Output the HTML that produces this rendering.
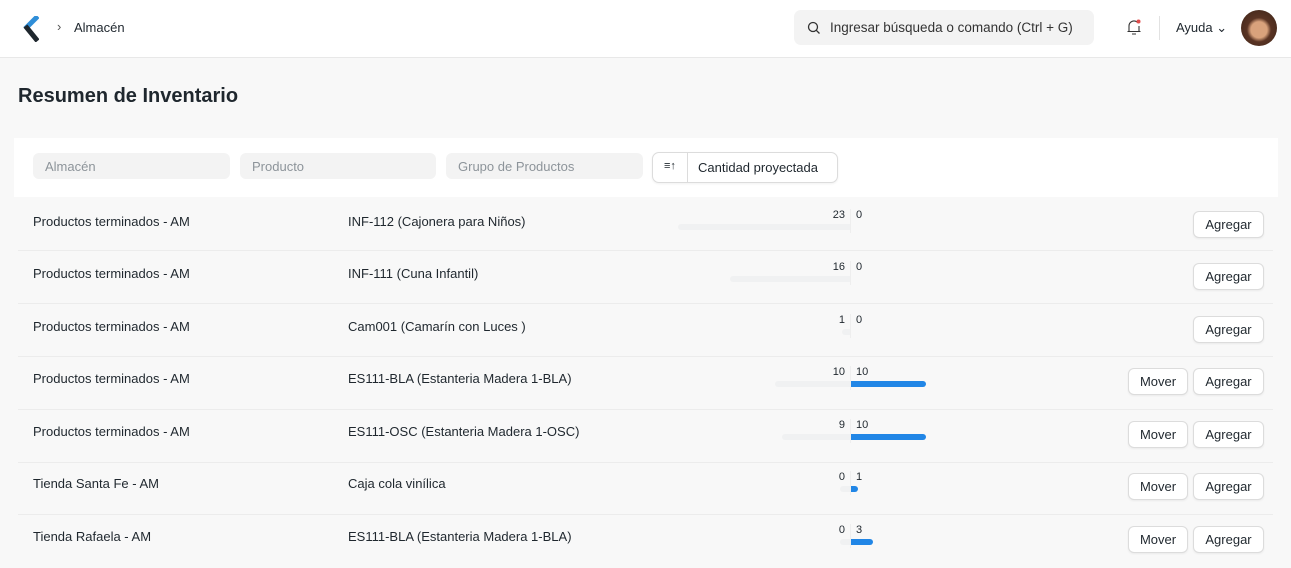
<!DOCTYPE html>
<html><head><meta charset="utf-8"><style>
*{box-sizing:border-box;margin:0;padding:0}
body{width:1291px;height:563px;overflow:hidden;background:#f8f8f8;font-family:"Liberation Sans",sans-serif;color:#1f272e;position:relative}
.nav{position:absolute;left:0;top:0;width:1291px;height:58px;background:#fff;border-bottom:1px solid #e8e8e8}
.abs{position:absolute}
.t13{font-size:13px}
.inp{position:absolute;top:153px;height:26px;background:#f3f3f3;border-radius:6px;font-size:13px;color:#8d949a;padding:6px 12px}
.row{position:absolute;left:18px;width:1255px;height:53px;border-bottom:1px solid #ececec}
.c1{position:absolute;left:15px;font-size:13px}
.c2{position:absolute;left:330px;font-size:13px}
.n{position:absolute;font-size:11px}
.gb{position:absolute;height:6px;background:#f0f1f2;border-radius:3px 0 0 3px}
.bb{position:absolute;left:833px;height:6px;background:#2186e6;border-radius:0 3px 3px 0}
.btn{position:absolute;height:27px;background:#fff;border:1px solid #dcdcdc;border-radius:6px;font-size:13px;text-align:center;line-height:25px;box-shadow:0 1px 2px rgba(0,0,0,.06)}
.vl{position:absolute;left:832px;width:1px;background:#eee}
</style></head><body>
<div class="nav">
<svg class="abs" style="left:23px;top:16px" width="16" height="26" viewBox="0 0 16 26"><path d="M13 2 L4 11" stroke="#2f8ed8" stroke-width="5" stroke-linecap="square"/><path d="M4 12 L13 23" stroke="#1f272e" stroke-width="5" stroke-linecap="square"/></svg>
<div class="abs" style="left:57px;top:19px;font-size:13px;color:#555">›</div>
<div class="abs t13" style="left:74px;top:20px">Almacén</div>
<div class="abs" style="left:794px;top:10px;width:300px;height:35px;background:#f3f3f3;border-radius:7px"></div>
<svg class="abs" style="left:807px;top:21px" width="14" height="14" viewBox="0 0 14 14"><circle cx="6" cy="6" r="4.5" fill="none" stroke="#333" stroke-width="1.3"/><path d="M9.3 9.3 L12.5 12.5" stroke="#333" stroke-width="1.3"/></svg>
<div class="abs" style="left:830px;top:20px;color:#333;font-size:13.5px">Ingresar búsqueda o comando (Ctrl + G)</div>
<svg class="abs" style="left:1126px;top:18px" width="16" height="18" viewBox="0 0 16 18"><path d="M3 13 V8 A5 5 0 0 1 11 4 M13 8 V13 M1.5 13.5 H14.5 M6 16 H10" fill="none" stroke="#333" stroke-width="1.1"/><circle cx="12.5" cy="3.5" r="2" fill="#e24c4c"/></svg>
<div class="abs" style="left:1159px;top:16px;width:1px;height:24px;background:#e2e2e2"></div>
<div class="abs" style="left:1176px;top:20px;font-size:13px">Ayuda ⌄</div>
<div class="abs" style="left:1241px;top:10px;width:36px;height:36px;border-radius:50%;background:radial-gradient(circle at 50% 55%,#d9a27c 0 30%,#5a3424 45%,#3b2418 100%)"></div>
</div>
<div class="abs" style="left:18px;top:85px;font-size:20px;font-weight:bold">Resumen de Inventario</div>
<div class="abs" style="left:14px;top:138px;width:1264px;height:59px;background:#fff"></div>
<div class="inp" style="left:33px;width:197px">Almacén</div>
<div class="inp" style="left:240px;width:196px">Producto</div>
<div class="inp" style="left:446px;width:197px">Grupo de Productos</div>
<div class="abs" style="left:652px;top:152px;width:186px;height:31px;background:#fff;border:1px solid #dcdcdc;border-radius:7px;box-shadow:0 1px 2px rgba(0,0,0,.06)">
<div class="abs" style="left:34px;top:0;width:1px;height:29px;background:#dcdcdc"></div>
<div class="abs" style="left:11px;top:7px;font-size:11px">≡↑</div>
<div class="abs t13" style="left:45px;top:7px">Cantidad proyectada</div></div>

<div class="row" style="top:198px"><div class="c1" style="top:16px">Productos terminados - AM</div><div class="c2" style="top:16px">INF-112 (Cajonera para Niños)</div>
<div class="vl" style="top:11px;height:24px"></div><div class="n" style="right:428px;top:11px">23</div><div class="n" style="left:838px;top:11px">0</div><div class="gb" style="left:660px;width:172px;top:26px"></div>
<div class="btn" style="left:1175px;top:13px;width:71px">Agregar</div></div>
<div class="row" style="top:251px"><div class="c1" style="top:15px">Productos terminados - AM</div><div class="c2" style="top:15px">INF-111 (Cuna Infantil)</div>
<div class="vl" style="top:10px;height:24px"></div><div class="n" style="right:428px;top:10px">16</div><div class="n" style="left:838px;top:10px">0</div><div class="gb" style="left:712px;width:120px;top:25px"></div>
<div class="btn" style="left:1175px;top:12px;width:71px">Agregar</div></div>
<div class="row" style="top:304px"><div class="c1" style="top:15px">Productos terminados - AM</div><div class="c2" style="top:15px">Cam001 (Camarín con Luces )</div>
<div class="vl" style="top:10px;height:24px"></div><div class="n" style="right:428px;top:10px">1</div><div class="n" style="left:838px;top:10px">0</div><div class="gb" style="left:824px;width:8px;top:25px"></div>
<div class="btn" style="left:1175px;top:12px;width:71px">Agregar</div></div>
<div class="row" style="top:357px"><div class="c1" style="top:14px">Productos terminados - AM</div><div class="c2" style="top:14px">ES111-BLA (Estanteria Madera 1-BLA)</div>
<div class="vl" style="top:9px;height:24px"></div><div class="n" style="right:428px;top:9px">10</div><div class="n" style="left:838px;top:9px">10</div><div class="gb" style="left:757px;width:75px;top:24px"></div><div class="bb" style="width:75px;top:24px"></div>
<div class="btn" style="left:1110px;top:11px;width:60px">Mover</div><div class="btn" style="left:1175px;top:11px;width:71px">Agregar</div></div>
<div class="row" style="top:410px"><div class="c1" style="top:14px">Productos terminados - AM</div><div class="c2" style="top:14px">ES111-OSC (Estanteria Madera 1-OSC)</div>
<div class="vl" style="top:9px;height:24px"></div><div class="n" style="right:428px;top:9px">9</div><div class="n" style="left:838px;top:9px">10</div><div class="gb" style="left:764px;width:68px;top:24px"></div><div class="bb" style="width:75px;top:24px"></div>
<div class="btn" style="left:1110px;top:11px;width:60px">Mover</div><div class="btn" style="left:1175px;top:11px;width:71px">Agregar</div></div>
<div class="row" style="top:462px"><div class="c1" style="top:14px">Tienda Santa Fe - AM</div><div class="c2" style="top:14px">Caja cola vinílica</div>
<div class="vl" style="top:9px;height:24px"></div><div class="n" style="right:428px;top:9px">0</div><div class="n" style="left:838px;top:9px">1</div><div class="gb" style="left:822px;width:10px;top:24px"></div><div class="bb" style="width:7px;top:24px"></div>
<div class="btn" style="left:1110px;top:11px;width:60px">Mover</div><div class="btn" style="left:1175px;top:11px;width:71px">Agregar</div></div>
<div class="row" style="top:515px;border:none"><div class="c1" style="top:14px">Tienda Rafaela - AM</div><div class="c2" style="top:14px">ES111-BLA (Estanteria Madera 1-BLA)</div>
<div class="vl" style="top:9px;height:24px"></div><div class="n" style="right:428px;top:9px">0</div><div class="n" style="left:838px;top:9px">3</div><div class="gb" style="left:822px;width:10px;top:24px"></div><div class="bb" style="width:22px;top:24px"></div>
<div class="btn" style="left:1110px;top:11px;width:60px">Mover</div><div class="btn" style="left:1175px;top:11px;width:71px">Agregar</div></div>
</body></html>
